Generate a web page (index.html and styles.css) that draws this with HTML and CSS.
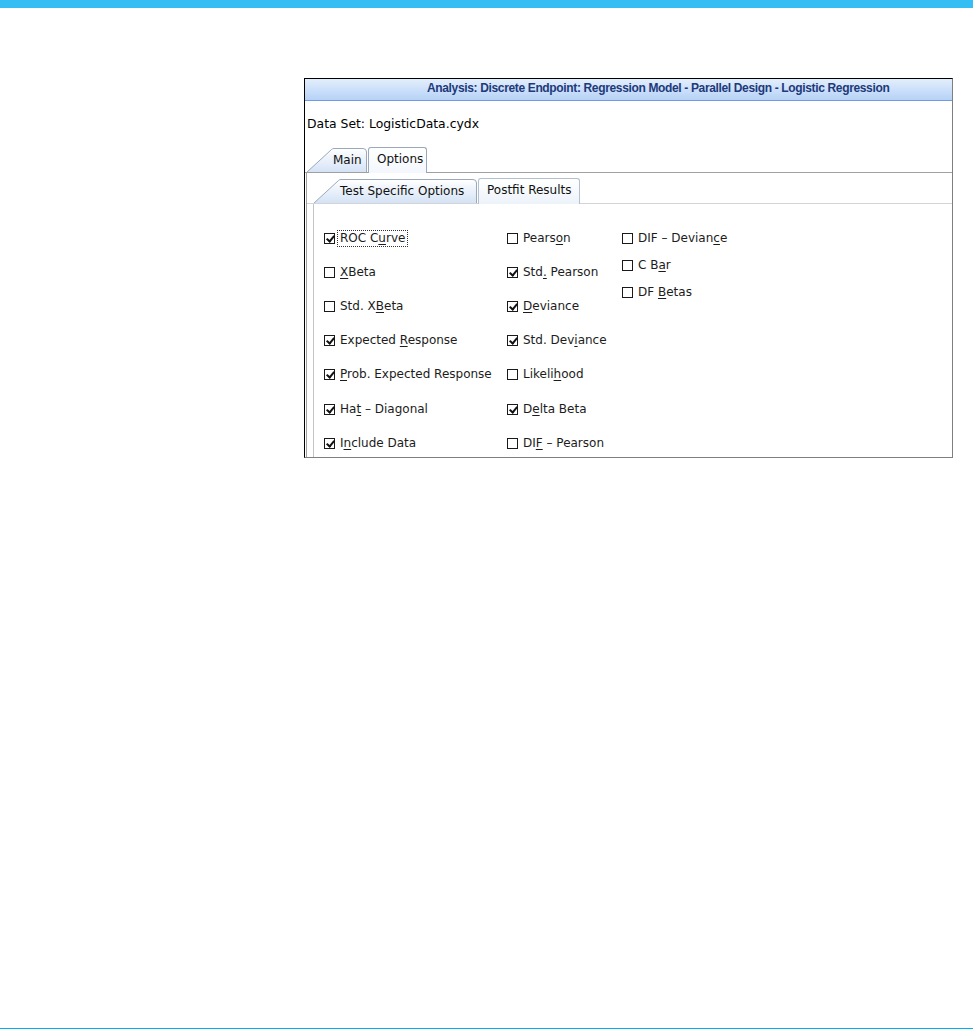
FILE: index.html
```html
<!DOCTYPE html>
<html>
<head>
<meta charset="utf-8">
<link rel="stylesheet" href="styles.css">
</head>
<body>
<div class="page">
  <div class="topbar"></div>
  <main class="main">
    <section class="window">
      <header class="title">Analysis: Discrete Endpoint: Regression Model - Parallel Design - Logistic Regression</header>
      <div class="dataset">Data Set: LogisticData.cydx</div>
      <div class="outer-tabs">
        <div class="tab tab-main">
          <svg class="tab-bg" width="61" height="24" viewBox="0 0 61 24">
            <defs><linearGradient id="gm" x1="0" y1="0" x2="0" y2="1"><stop offset="0" stop-color="#ffffff"/><stop offset="1" stop-color="#d3e2f6"/></linearGradient></defs>
            <path d="M0.5 24.5 L25.5 1.5 Q26.5 0.5 28 0.5 L57 0.5 Q60.5 0.5 60.5 4 L60.5 24.5 Z" fill="url(#gm)" stroke="#9aa8b9"/>
          </svg>
          <span class="tab-label">Main</span>
        </div>
        <div class="tab tab-active tab-options"><span class="tab-label">Options</span></div>
      </div>
      <div class="options-panel">
        <div class="inner-tabs">
          <div class="tab tab-test">
            <svg class="tab-bg" width="164" height="24" viewBox="0 0 164 24">
              <defs><linearGradient id="gt" x1="0" y1="0" x2="0" y2="1"><stop offset="0" stop-color="#ffffff"/><stop offset="1" stop-color="#d3e2f6"/></linearGradient></defs>
              <path d="M0.5 24.5 L25.5 1.5 Q26.5 0.5 28 0.5 L160 0.5 Q163.5 0.5 163.5 4 L163.5 24.5 Z" fill="url(#gt)" stroke="#9aa8b9"/>
            </svg>
            <span class="tab-label">Test Specific Options</span>
          </div>
          <div class="tab tab-active tab-postfit"><span class="tab-label">Postfit Results</span></div>
        </div>
        <div class="inner-panel">
          <div class="checks">
            <div class="col col-1">
              <div class="check on"><span class="box"></span><span class="label focus">ROC C<u>u</u>rve</span></div>
              <div class="check"><span class="box"></span><span class="label"><u>X</u>Beta</span></div>
              <div class="check"><span class="box"></span><span class="label">Std. X<u>B</u>eta</span></div>
              <div class="check on"><span class="box"></span><span class="label">Expected <u>R</u>esponse</span></div>
              <div class="check on"><span class="box"></span><span class="label"><u>P</u>rob. Expected Response</span></div>
              <div class="check on"><span class="box"></span><span class="label">Ha<u>t</u> – Diagonal</span></div>
              <div class="check on"><span class="box"></span><span class="label">I<u>n</u>clude Data</span></div>
            </div>
            <div class="col col-2">
              <div class="check"><span class="box"></span><span class="label">Pears<u>o</u>n</span></div>
              <div class="check on"><span class="box"></span><span class="label">Std<u>.</u> Pearson</span></div>
              <div class="check on"><span class="box"></span><span class="label"><u>D</u>eviance</span></div>
              <div class="check on"><span class="box"></span><span class="label">Std. Dev<u>i</u>ance</span></div>
              <div class="check"><span class="box"></span><span class="label">Likeli<u>h</u>ood</span></div>
              <div class="check on"><span class="box"></span><span class="label">D<u>e</u>lta Beta</span></div>
              <div class="check"><span class="box"></span><span class="label">DI<u>F</u> – Pearson</span></div>
            </div>
            <div class="col col-3">
              <div class="check"><span class="box"></span><span class="label">DIF – Devian<u>c</u>e</span></div>
              <div class="check"><span class="box"></span><span class="label">C B<u>a</u>r</span></div>
              <div class="check"><span class="box"></span><span class="label">DF <u>B</u>etas</span></div>
            </div>
          </div>
        </div>
      </div>
    </section>
  </main>
  <div class="bottomline"></div>
</div>
</body>
</html>
```
FILE: styles.css
```css
html, body {
  margin: 0;
  padding: 0;
  background: #fff;
}
body {
  font-family: "DejaVu Sans", "Noto Sans", sans-serif;
  font-size: 12px;
  color: #111;
}
.page {
  height: 1029px;
  display: flex;
  flex-direction: column;
}
.topbar {
  flex: none;
  height: 8px;
  background: #35bef3;
}
.main {
  flex: 1;
  padding: 70px 0 0 304px;
}
.bottomline {
  flex: none;
  height: 1px;
  background: #00aeef;
}
.window {
  box-sizing: border-box;
  width: 649px;
  height: 380px;
  border: 1px solid;
  border-color: #000 #7f7f7f #7f7f7f #000;
  overflow: hidden;
  display: flex;
  flex-direction: column;
}
.title {
  flex: none;
  height: 21px;
  line-height: 18px;
  border-bottom: 1px solid #6d9de0;
  background: linear-gradient(#e3eefc, #b6d2f7);
  font-family: "Liberation Sans", Arial, sans-serif;
  font-weight: bold;
  font-size: 12px;
  letter-spacing: -0.35px;
  color: #1d3a7a;
  padding-left: 122px;
  white-space: nowrap;
}
.dataset {
  flex: none;
  padding: 16px 0 1px 2px;
  line-height: 14px;
  height: 14px;
  font-size: 12.4px;
  color: #000;
}
.outer-tabs {
  flex: none;
  margin-top: 15px;
  height: 25px;
  padding-left: 1px;
  display: flex;
  align-items: flex-end;
  gap: 1px;
  border-bottom: 1px solid #a0a0a0;
}
.tab {
  position: relative;
  box-sizing: border-box;
  white-space: nowrap;
}
.tab-bg {
  position: absolute;
  left: 0;
  top: 0;
  display: block;
}
.tab-label {
  position: relative;
  display: block;
}
.tab-main {
  width: 61px;
  height: 24px;
}
.tab-main .tab-label {
  padding-left: 27px;
  line-height: 24px;
}
.tab-active {
  height: 26px;
  margin-bottom: -1px;
  border: 1px solid #9aa8b9;
  border-bottom: none;
  border-radius: 3px 3px 0 0;
  background: linear-gradient(#ffffff, #f3f7fd);
}
.tab-options {
  width: 59px;
}
.tab-options .tab-label {
  padding-left: 8px;
  line-height: 23px;
}
.options-panel {
  flex: 1;
  margin-left: 1px;
  border-left: 1px solid #a0a0a0;
  display: flex;
  flex-direction: column;
}
.inner-tabs {
  flex: none;
  height: 30px;
  padding-left: 6px;
  display: flex;
  align-items: flex-end;
  gap: 1px;
  border-bottom: 1px solid #d4d4d4;
}
.tab-test {
  width: 164px;
  height: 24px;
}
.tab-test .tab-label {
  padding-left: 27px;
  line-height: 24px;
}
.tab-postfit {
  width: 102px;
  border-color: #b3c0ce;
  background: linear-gradient(#ffffff, #edf3fb);
}
.tab-postfit .tab-label {
  padding-left: 8px;
  line-height: 23px;
}
.inner-panel {
  flex: 1;
  margin-left: 6px;
  border-left: 1px solid #c4c4c4;
}
.checks {
  display: flex;
  padding-left: 10px;
}
.col {
  display: flex;
  flex-direction: column;
}
.col-1 {
  width: 183px;
  padding-top: 17px;
}
.col-2 {
  width: 115px;
  padding-top: 17px;
}
.col-3 {
  padding-top: 21px;
}
.check {
  display: flex;
  align-items: center;
  height: 34.2px;
  gap: 3px;
}
.col-3 .check {
  height: 27px;
}
.box {
  box-sizing: border-box;
  flex: none;
  width: 11px;
  height: 11px;
  border: 1px solid #1a1a1a;
  background: #fff;
  position: relative;
}
.check.on .box::after {
  content: "";
  position: absolute;
  left: 2.5px;
  top: 0px;
  width: 3px;
  height: 6px;
  border-right: 2px solid #111;
  border-bottom: 2px solid #111;
  transform: rotate(40deg);
}
.label {
  border: 1px dotted transparent;
  padding: 0 2px;
  margin-left: -1px;
  line-height: 15px;
  color: #1c1c1c;
  white-space: nowrap;
}
.label.focus {
  border-color: #333;
}
.label u {
  text-decoration: underline;
  text-underline-offset: 2px;
}
```
